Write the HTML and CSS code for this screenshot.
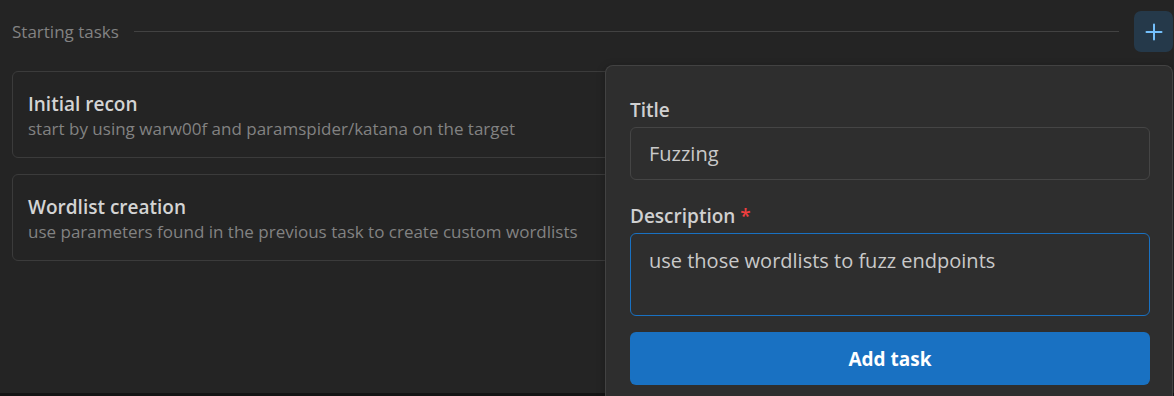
FILE: index.html
```html
<!DOCTYPE html>
<html lang="en">
<head>
  <meta charset="UTF-8" />
  <meta name="viewport" content="width=device-width, initial-scale=1.0"/>
  <title>Tasks</title>
  <link rel="stylesheet" href="styles.css">
</head>
<body>
  <div class="page">
    <div class="sectionHeader">
      <span class="sectionLabel">Starting tasks</span>
      <div class="sectionLine"></div>
      <button class="addBtn" aria-label="Add task">
        <svg width="18" height="18" viewBox="0 0 18 18" fill="none">
          <path d="M9 1.5v15M1.5 9h15" stroke="#74c0fc" stroke-width="2" stroke-linecap="round"/>
        </svg>
      </button>
    </div>

    <div class="taskList">
      <div class="taskCard">
        <div class="taskTitle">Initial recon</div>
        <div class="taskDesc">start by using warw00f and paramspider/katana on the target</div>
      </div>
      <div class="taskCard">
        <div class="taskTitle">Wordlist creation</div>
        <div class="taskDesc">use parameters found in the previous task to create custom wordlists</div>
      </div>
    </div>
  </div>

  <!-- 새 작업 팝오버 -->
  <div class="popover">
    <div class="field">
      <label class="fieldLabel" for="titleInput">Title</label>
      <input id="titleInput" class="textInput" type="text" value="Fuzzing">
    </div>
    <div class="field">
      <label class="fieldLabel" for="descInput">Description <span class="required">*</span></label>
      <textarea id="descInput" class="textArea">use those wordlists to fuzz endpoints</textarea>
    </div>
    <button class="submitBtn">Add task</button>
  </div>
</body>
</html>
```

FILE: styles.css
```css
* {
  box-sizing: border-box;
}
html {
  background: #141414;
}
body {
  margin: 0;
  height: 396px;
  overflow: hidden;
  position: relative;
  font-family: 'Open Sans', 'Noto Sans', sans-serif;
  color: #c9c9c9;
}
.page {
  height: 393px;
  background: #242424;
  padding: 11px 1px 0 12px;
}
.sectionHeader {
  display: flex;
  align-items: center;
  height: 41px;
}
.sectionLabel {
  font-size: 17px;
  color: #828282;
  line-height: 24px;
}
.sectionLine {
  flex: 1;
  height: 1px;
  background: #424242;
  margin: 0 15px;
}
.addBtn {
  width: 39px;
  height: 41px;
  padding: 0;
  border: none;
  border-radius: 7px;
  background: #25394a;
  display: flex;
  align-items: center;
  justify-content: center;
  cursor: pointer;
}
.taskList {
  margin-top: 19px;
  padding-right: 11px;
  display: flex;
  flex-direction: column;
  gap: 16px;
}
.taskCard {
  border: 1px solid #3b3b3b;
  border-radius: 6px;
  padding: 19px 15px 16px;
  background: #242424;
}
.taskTitle {
  font-size: 19px;
  line-height: 26px;
  font-weight: 600;
  color: #d4d4d4;
}
.taskDesc {
  font-size: 17px;
  line-height: 24px;
  color: #828282;
}
.popover {
  position: absolute;
  top: 65px;
  left: 605px;
  right: 1px;
  bottom: 0;
  background: #2e2e2e;
  border: 1px solid #424242;
  border-bottom: none;
  border-radius: 8px 8px 0 0;
  padding: 31px 22px 0 24px;
  box-shadow: 0 2px 8px rgba(0,0,0,0.3);
}
.field {
  display: flex;
  flex-direction: column;
  margin-bottom: 23px;
}
.field + .field {
  margin-bottom: 16px;
}
.fieldLabel {
  font-size: 19px;
  line-height: 26px;
  font-weight: 600;
  color: #d0d0d0;
  margin-bottom: 4px;
}
.required {
  color: #f03e3e;
}
.textInput,
.textArea {
  width: 100%;
  font-family: inherit;
  font-size: 20px;
  color: #c9c9c9;
  background: #2e2e2e;
  border: 1px solid #454545;
  border-radius: 6px;
  padding: 0 18px;
  outline: none;
}
.textInput {
  height: 53px;
}
.textArea {
  height: 83px;
  line-height: 30px;
  padding-top: 12px;
  resize: none;
  border-color: #1971c2;
}
.submitBtn {
  width: 100%;
  height: 53px;
  border: none;
  border-radius: 6px;
  background: #1971c2;
  color: white;
  font-family: inherit;
  font-size: 19px;
  font-weight: 700;
  cursor: pointer;
}
```
